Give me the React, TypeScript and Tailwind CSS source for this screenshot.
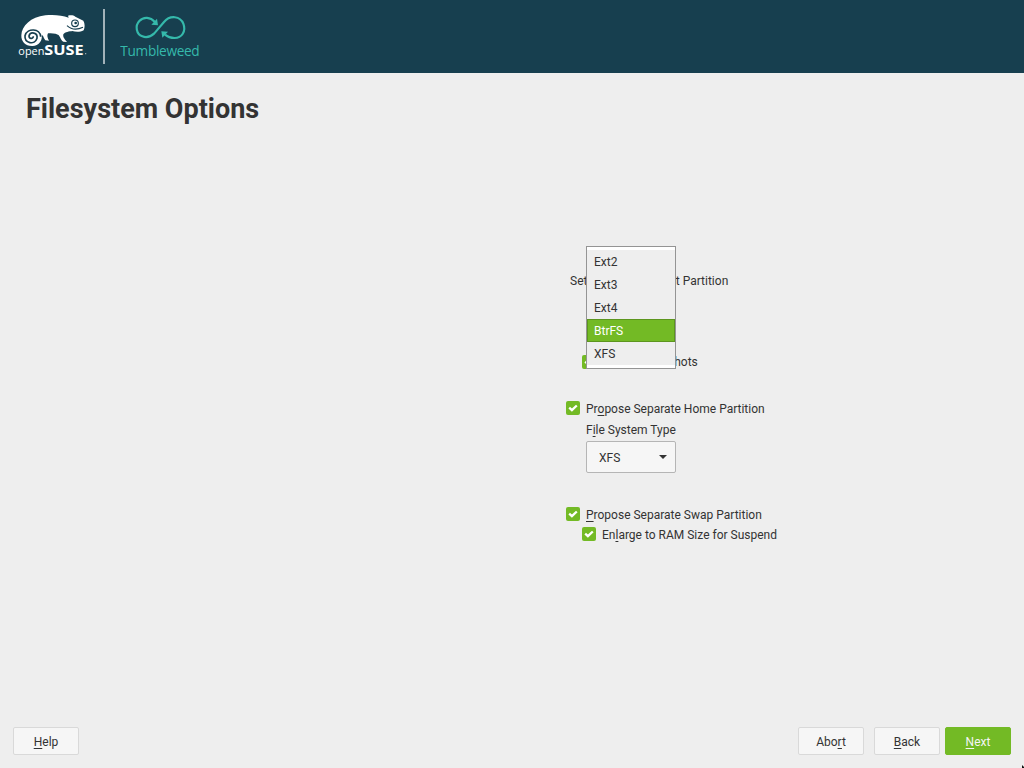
import React from "react";

function Mnemonic({ children }: { children: React.ReactNode }) {
  return (
    <span className="underline decoration-1 underline-offset-2 [text-decoration-skip-ink:none]">{children}</span>
  );
}

function Check() {
  return (
    <svg className="h-3.5 w-3.5 shrink-0" viewBox="0 0 14 14">
      <rect width="14" height="14" rx="2" fill="#73ba25" />
      <path d="M3.2 6.7 L5.9 9.2 L10.8 4.5" fill="none" stroke="#fff" strokeWidth="2.3" />
    </svg>
  );
}

function SuseLogo() {
  return (
    <svg className="h-[73px] w-[93px] shrink-0" viewBox="0 0 279 219">
      <path
        d="M34 106 C35 78 62 51 106 46 C132 43 156 46 176 53 L174 47 C183 45 191 46 196 50 L220 62 C225 71 225 82 221 91 C210 97 196 96 187 93 C178 94 165 96 160 103 C158 112 165 119 171 126 L160 125 C151 119 151 108 144 104 C134 99 125 101 114 100 C110 106 113 115 117 122 L106 121 C100 114 101 106 95 106 C98 122 86 138 68 138 C47 139 33 125 34 106 Z"
        fill="#fff"
      />
      <path
        d="M92 110 C91 85 52 83 45 107 C43 130 74 137 81 115 C84 98 61 93 57 108 C57 117 70 118 70 109"
        fill="none"
        stroke="#173f4f"
        strokeWidth="5"
      />
      <circle cx="195" cy="70" r="10" fill="none" stroke="#173f4f" strokeWidth="3.5" />
      <circle cx="197" cy="69" r="4" fill="#173f4f" />
      <path d="M171 77 C184 89 202 90 219 82" fill="none" stroke="#173f4f" strokeWidth="3.5" />
      <text x="25" y="164" textLength="78" lengthAdjust="spacingAndGlyphs" fill="#fff" className="font-['Open_Sans',sans-serif] text-[34px]">open</text>
      <text x="103" y="165" textLength="118" lengthAdjust="spacingAndGlyphs" fill="#fff" className="font-['Open_Sans',sans-serif] text-[41px] font-bold">SUSE</text>
      <circle cx="227" cy="161" r="2" fill="#b8c5ca" />
    </svg>
  );
}

function TumbleweedLogo() {
  return (
    <svg className="ml-[15px] h-[73px] w-[84px] shrink-0" viewBox="0 0 252 219">
      <g fill="none" stroke="#35b9ab" strokeWidth="6.5">
        <path d="M105 66 C91 51 71 49 58 63 C44 78 49 102 67 109 C79 114 92 110 103 100 L132 66 C150 44 181 48 190 71 C199 94 185 114 164 114 C151 114 143 111 135 104" />
      </g>
      <path d="M111 56 L114 76 L94 74 Z M124 94 L144 95 L127 113 Z" fill="#35b9ab" />
      <text x="1" y="167" textLength="238" lengthAdjust="spacing" fill="#35b9ab" className="font-['Open_Sans','Noto_Sans',sans-serif] text-[41px]">Tumbleweed</text>
    </svg>
  );
}

function Button({ children, primary }: { children: React.ReactNode; primary?: boolean }) {
  return (
    <button
      className={
        "h-7 w-[66px] rounded-[2px] border pt-px text-center leading-none " +
        (primary ? "border-[#73ba25] bg-[#73ba25] text-[#f5f5f5]" : "border-[#d9d9d9] bg-[#f6f6f6]")
      }
    >
      {children}
    </button>
  );
}

const filesystems = ["Ext2", "Ext3", "Ext4", "BtrFS", "XFS"];

export default function App() {
  return (
    <div className="flex h-[768px] w-[1024px] flex-col overflow-hidden bg-[#eeeeee] font-[Roboto,sans-serif] text-[12px] leading-[14px] text-[#333333]">
      <header className="flex h-[73px] shrink-0 items-center bg-[#173f4f] pl-[10px]">
        <SuseLogo />
        <div className="h-[55px] w-0.5 shrink-0 bg-[#a2b2b9]" />
        <TumbleweedLogo />
      </header>

      <h1 className="mt-[18px] ml-[26px] h-9 text-[27px] leading-9 font-bold">Filesystem Options</h1>

      <main className="ml-[566px] flex flex-1 flex-col pt-[147px]">
        <div className="relative h-[127px]">
          <p className="ml-1">Settings for the Root Partition</p>
          <div className="mt-[66px] ml-4 flex items-center gap-1.5">
            <Check />
            <span className="pt-px">
              Enable <Mnemonic>S</Mnemonic>napshots
            </span>
          </div>
          <ul className="absolute -top-7 left-5 h-[123px] w-[90px] border border-[#949494] bg-white py-[3px]">
            {filesystems.map((name) => (
              <li
                key={name}
                className={
                  "flex h-[23px] items-center border px-1.5 " +
                  (name === "BtrFS" ? "border-[#5c951e] bg-[#73ba25] text-white" : "border-[#eeeeee] bg-[#eeeeee]")
                }
              >
                {name}
              </li>
            ))}
          </ul>
        </div>

        <div className="flex items-center gap-1.5">
          <Check />
          <span className="relative top-px">
            Pr<Mnemonic>o</Mnemonic>pose Separate Home Partition
          </span>
        </div>
        <p className="mt-2 ml-5">
          F<Mnemonic>i</Mnemonic>le System Type
        </p>
        <div className="mt-1 ml-5 flex h-8 w-[90px] items-center justify-between rounded-[2px] border border-[#b5b5b5] bg-[#f6f6f6] pr-2 pl-3">
          <span className="pt-0.5">XFS</span>
          <svg className="h-1 w-2" viewBox="0 0 8 4">
            <path d="M0 0 H8 L4 4 Z" fill="#333" />
          </svg>
        </div>

        <div className="mt-[34px] flex items-center gap-1.5">
          <Check />
          <span className="relative top-px">
            <Mnemonic>P</Mnemonic>ropose Separate Swap Partition
          </span>
        </div>
        <div className="mt-1.5 ml-4 flex items-center gap-1.5">
          <Check />
          <span className="relative top-px">
            En<Mnemonic>l</Mnemonic>arge to RAM Size for Suspend
          </span>
        </div>
      </main>

      <footer className="flex h-[41px] shrink-0 items-start pr-[13px] pl-[13px]">
        <Button>
          <Mnemonic>H</Mnemonic>elp
        </Button>
        <div className="ml-auto flex">
          <Button>
            Abo<Mnemonic>r</Mnemonic>t
          </Button>
          <div className="ml-2.5 flex gap-[5px]">
            <Button>
              <Mnemonic>B</Mnemonic>ack
            </Button>
            <Button primary>
              <Mnemonic>N</Mnemonic>ext
            </Button>
          </div>
        </div>
      </footer>
      <svg className="absolute top-[765px] left-[1022px] h-[3px] w-0.5" viewBox="0 0 2 3">
        <path d="M0 0 L2 2 V3 H0 Z" fill="#111" />
      </svg>
    </div>
  );
}
